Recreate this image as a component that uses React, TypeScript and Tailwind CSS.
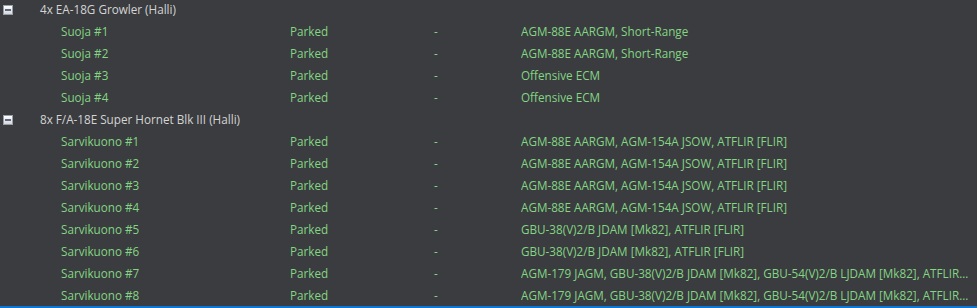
import React from 'react';

type Unit = { name: string; loadout: string };
type Group = { title: string; units: Unit[] };

const groups: Group[] = [
  {
    title: '4x EA-18G Growler (Halli)',
    units: [
      { name: 'Suoja #1', loadout: 'AGM-88E AARGM, Short-Range' },
      { name: 'Suoja #2', loadout: 'AGM-88E AARGM, Short-Range' },
      { name: 'Suoja #3', loadout: 'Offensive ECM' },
      { name: 'Suoja #4', loadout: 'Offensive ECM' },
    ],
  },
  {
    title: '8x F/A-18E Super Hornet Blk III (Halli)',
    units: [
      { name: 'Sarvikuono #1', loadout: 'AGM-88E AARGM, AGM-154A JSOW, ATFLIR [FLIR]' },
      { name: 'Sarvikuono #2', loadout: 'AGM-88E AARGM, AGM-154A JSOW, ATFLIR [FLIR]' },
      { name: 'Sarvikuono #3', loadout: 'AGM-88E AARGM, AGM-154A JSOW, ATFLIR [FLIR]' },
      { name: 'Sarvikuono #4', loadout: 'AGM-88E AARGM, AGM-154A JSOW, ATFLIR [FLIR]' },
      { name: 'Sarvikuono #5', loadout: 'GBU-38(V)2/B JDAM [Mk82], ATFLIR [FLIR]' },
      { name: 'Sarvikuono #6', loadout: 'GBU-38(V)2/B JDAM [Mk82], ATFLIR [FLIR]' },
      {
        name: 'Sarvikuono #7',
        loadout: 'AGM-179 JAGM, GBU-38(V)2/B JDAM [Mk82], GBU-54(V)2/B LJDAM [Mk82], ATFLIR...',
      },
      {
        name: 'Sarvikuono #8',
        loadout: 'AGM-179 JAGM, GBU-38(V)2/B JDAM [Mk82], GBU-54(V)2/B LJDAM [Mk82], ATFLIR...',
      },
    ],
  },
];

function CollapseBox() {
  return (
    <span className="flex h-[10px] w-[10px] items-center justify-center border border-[#9a9ea6] bg-gradient-to-b from-white to-[#d6d8dc]">
      <span className="h-[2px] w-[6px] bg-[#5a6a82]" />
    </span>
  );
}

export default function App() {
  return (
    <div
      className="h-[308px] w-[977px] overflow-hidden bg-[#3a3c3f] text-[11.7px]"
      style={{ fontFamily: '"Open Sans", "Noto Sans", sans-serif' }}
    >
      <div className="flex h-[306px] flex-col overflow-hidden">
        <div className="-mt-[1px]">
          {groups.map((g) => (
            <div key={g.title}>
              <div className="flex h-[22px] items-center">
                <div className="flex w-[40px] items-center pl-[3px]">
                  <CollapseBox />
                </div>
                <span className="text-[#d4d4d4]">{g.title}</span>
              </div>
              {g.units.map((u) => (
                <div
                  key={u.name}
                  className="grid h-[22px] grid-cols-[290px_144px_87px_1fr] items-center text-[#84d584]"
                >
                  <span className="pl-[61px]">{u.name}</span>
                  <span>Parked</span>
                  <span>-</span>
                  <span className="overflow-hidden whitespace-nowrap">{u.loadout}</span>
                </div>
              ))}
            </div>
          ))}
        </div>
      </div>
      <div className="h-[2px] bg-[#0a78d7]" />
    </div>
  );
}
